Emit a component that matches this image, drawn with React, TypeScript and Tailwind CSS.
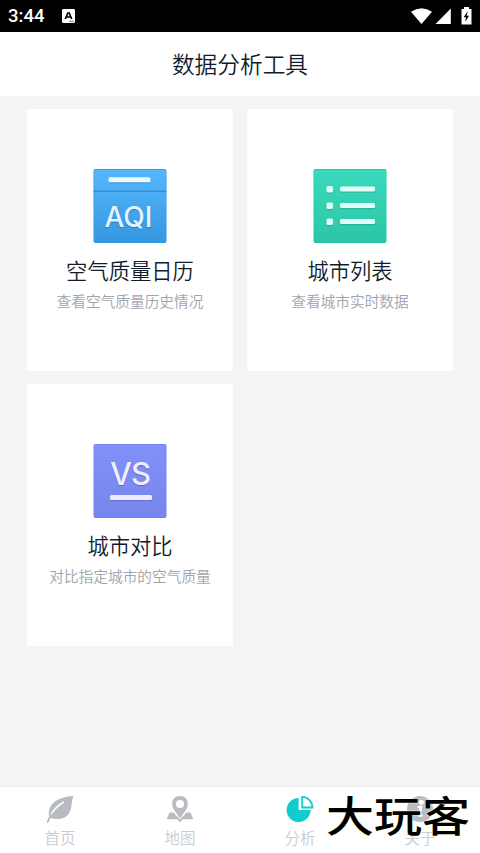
import React from "react";

const AqiIcon = () => (
  <svg width="74" height="74" viewBox="0 0 74 74">
    <defs>
      <linearGradient id="aqi" x1="0" y1="0" x2="0" y2="1">
        <stop offset="0" stopColor="#56b7fd" />
        <stop offset="1" stopColor="#3597df" />
      </linearGradient>
    </defs>
    <rect x="0.5" width="73" height="74" rx="2" fill="#2d96e3" />
    <rect x="1.2" y="0.7" width="71.6" height="72" rx="1.5" fill="url(#aqi)" />
    <rect x="0.5" y="21.5" width="73" height="1.4" fill="#2d8fd9" />
    <rect x="15.5" y="9.5" width="42" height="5" rx="1.5" fill="#2683c8" opacity="0.4" />
    <rect x="15.5" y="8.3" width="42" height="5" rx="1.5" fill="#eaf8ff" />
    <text
      x="35.5"
      y="57.5"
      textAnchor="middle"
      textLength="48"
      className="fill-[#e1f4ff] font-['Inter',sans-serif] text-[28px] font-medium [text-shadow:0_1px_1px_#277fc2]"
    >
      AQI
    </text>
  </svg>
);

const ListIcon = () => (
  <svg width="74" height="74" viewBox="0 0 74 74">
    <defs>
      <linearGradient id="list" x1="0" y1="0" x2="0" y2="1">
        <stop offset="0" stopColor="#3bdabc" />
        <stop offset="1" stopColor="#2bc6a8" />
      </linearGradient>
    </defs>
    <rect x="0.5" width="73" height="74" rx="2" fill="#20c3a4" />
    <rect x="1.2" y="0.7" width="71.6" height="72" rx="1.5" fill="url(#list)" />
    {[17, 33.5, 49.5].map((y) => (
      <g key={y}>
        <rect x="13.5" y={y + 1.2} width="6.5" height="6.5" rx="1.5" fill="#149b80" opacity="0.45" />
        <rect x="27" y={y + 1.8} width="35" height="5" rx="1.5" fill="#149b80" opacity="0.45" />
        <rect x="13.5" y={y} width="6.5" height="6.5" rx="1.5" fill="#dbfff6" />
        <rect x="27" y={y + 0.5} width="35" height="5" rx="1.5" fill="#e3fff8" />
      </g>
    ))}
  </svg>
);

const VsIcon = () => (
  <svg width="74" height="74" viewBox="0 0 74 74">
    <defs>
      <linearGradient id="vs" x1="0" y1="0" x2="0" y2="1">
        <stop offset="0" stopColor="#8291f9" />
        <stop offset="1" stopColor="#7786ec" />
      </linearGradient>
    </defs>
    <rect x="0.5" width="73" height="74" rx="2" fill="#7180f5" />
    <rect x="1.2" y="0.7" width="71.6" height="72" rx="1.5" fill="url(#vs)" />
    <text
      x="37.5"
      y="40.5"
      textAnchor="middle"
      textLength="41"
      className="fill-[#f0edff] font-['Inter',sans-serif] text-[31px] font-medium [text-shadow:0_1px_1px_#5865c9]"
    >
      VS
    </text>
    <rect x="17" y="52.2" width="42" height="5" rx="1.5" fill="#5561c4" opacity="0.5" />
    <rect x="17" y="51" width="42" height="5" rx="1.5" fill="#f0ebff" />
  </svg>
);

const LeafIcon = () => (
  <svg width="30" height="30" viewBox="0 0 30 30" fill="none">
    <path
      d="M28.5 1C19 1.5 10 4.5 6 10.5C3.4 14.5 3.5 18 4.2 21.5L6.2 23.2C13 25 20.5 24 24 18.5C27.5 13 25.5 8.5 28.5 1Z"
      fill="#b8bcc2"
    />
    <path d="M5.5 20.5C8.5 14.5 12.5 10.5 19 7" stroke="#fff" strokeWidth="1.5" />
    <path d="M2.8 27C3.5 24.5 4.5 22.5 6.5 19.8" stroke="#b8bcc2" strokeWidth="1.9" strokeLinecap="round" />
  </svg>
);

const MapIcon = () => (
  <svg width="30" height="30" viewBox="0 0 30 30" fill="#b8bcc2">
    <path d="M4.5 17.5H25.5L28.3 24.2H1.7Z" />
    <path d="M8 16.5H22L15 26Z" fill="#fff" />
    <path d="M10.5 21.5H19.5L15 27.5Z" />
    <path
      d="M15 0.5C10.2 0.5 6.7 4 6.7 8.5C6.7 14 11 18 15 24C19 18 23.3 14 23.3 8.5C23.3 4 19.8 0.5 15 0.5Z"
      stroke="#fff"
      strokeWidth="1"
    />
    <circle cx="15" cy="9" r="4.1" fill="#fff" />
  </svg>
);

const ChartIcon = () => (
  <svg width="30" height="30" viewBox="0 0 30 30">
    <path d="M13.6 3A12 12 0 1 0 25.6 15.1H13.6Z" fill="#11ccca" />
    <path d="M17.2 1.8V12.5H27.5A10.8 10.8 0 0 0 17.2 1.8Z" fill="none" stroke="#11ccca" strokeWidth="1.8" />
  </svg>
);

const InfoIcon = () => (
  <svg width="30" height="30" viewBox="0 0 30 30">
    <circle cx="15" cy="14" r="13" fill="#b8bcc2" />
    <circle cx="16.3" cy="7.2" r="2.5" fill="#fff" />
    <path d="M12.5 12H16L14.5 20.5H17.5" fill="none" stroke="#fff" strokeWidth="2.5" />
  </svg>
);

const tools = [
  { title: "空气质量日历", subtitle: "查看空气质量历史情况", icon: <AqiIcon /> },
  { title: "城市列表", subtitle: "查看城市实时数据", icon: <ListIcon /> },
  { title: "城市对比", subtitle: "对比指定城市的空气质量", icon: <VsIcon /> },
];

const tabs = [
  { label: "首页", icon: <LeafIcon /> },
  { label: "地图", icon: <MapIcon /> },
  { label: "分析", icon: <ChartIcon /> },
  { label: "关于", icon: <InfoIcon /> },
];

const StatusBar = () => (
  <div className="flex h-8 items-center bg-black px-2 text-white">
    <span className="font-['Roboto',sans-serif] text-[18.5px] font-medium leading-8">3:44</span>
    <svg className="ml-[18px]" width="13" height="14" viewBox="0 0 13 14">
      <rect width="13" height="14" rx="1.2" fill="#fff" />
      <path d="M3.3 10L5.8 4H7.2L9.7 10M4.5 8H8.5" fill="none" stroke="#000" strokeWidth="1.7" />
      <path d="M7 12.3H12" stroke="#777" />
    </svg>
    <svg className="ml-auto" width="62" height="20" viewBox="0 0 62 20" fill="#fff">
      <path d="M1 5.8Q11.5 -1.5 22 5.8L11.5 18Z" />
      <path d="M40.8 2.5V18H25.5Z" />
      <path d="M54 1H59V3H61.5V18.5H51.5V3H54Z" />
      <path d="M57.8 5L53.7 11.2H56L55.2 16L59 9.8H56.7Z" fill="#000" />
    </svg>
  </div>
);

const App = () => {
  return (
    <div className="relative flex h-[853px] w-[480px] flex-col overflow-hidden bg-[#f4f4f4] font-['Noto_Sans_CJK_SC',sans-serif]">
      <StatusBar />
      <header className="flex h-16 items-center justify-center bg-white text-[22.7px] font-[350] text-[#111c2c]">
        数据分析工具
      </header>
      <main className="grid flex-1 grid-cols-[206px_206px] content-start gap-x-3.5 gap-y-[13px] px-[27px] pt-[13px]">
        {tools.map(({ title, subtitle, icon }) => (
          <div key={title} className="flex h-[262px] flex-col items-center bg-white pt-[60px]">
            {icon}
            <h2 className="mt-[11px] text-[21.3px] font-[350] leading-8 text-[#111c2c]">{title}</h2>
            <p className="mt-[3px] text-[14.7px] font-[350] leading-6 text-[#a0a4ad]">{subtitle}</p>
          </div>
        ))}
      </main>
      <nav className="grid h-[67px] grid-cols-4 border-t border-[#ececec] bg-white">
        {tabs.map(({ label, icon }) => (
          <div
            key={label}
            className="flex flex-col items-center pt-2 text-[15.5px] font-[350] leading-6 text-[#c9ccd0]"
          >
            {icon}
            <span>{label}</span>
          </div>
        ))}
      </nav>
      <div className="absolute left-[326px] top-[784px] origin-left scale-y-[0.88] whitespace-nowrap text-[48px] font-medium leading-[60px] text-black [text-shadow:0_0_1px_#fffbd8,0_0_2px_#fffbd8]">
        大玩客
      </div>
    </div>
  );
};

export default App;
